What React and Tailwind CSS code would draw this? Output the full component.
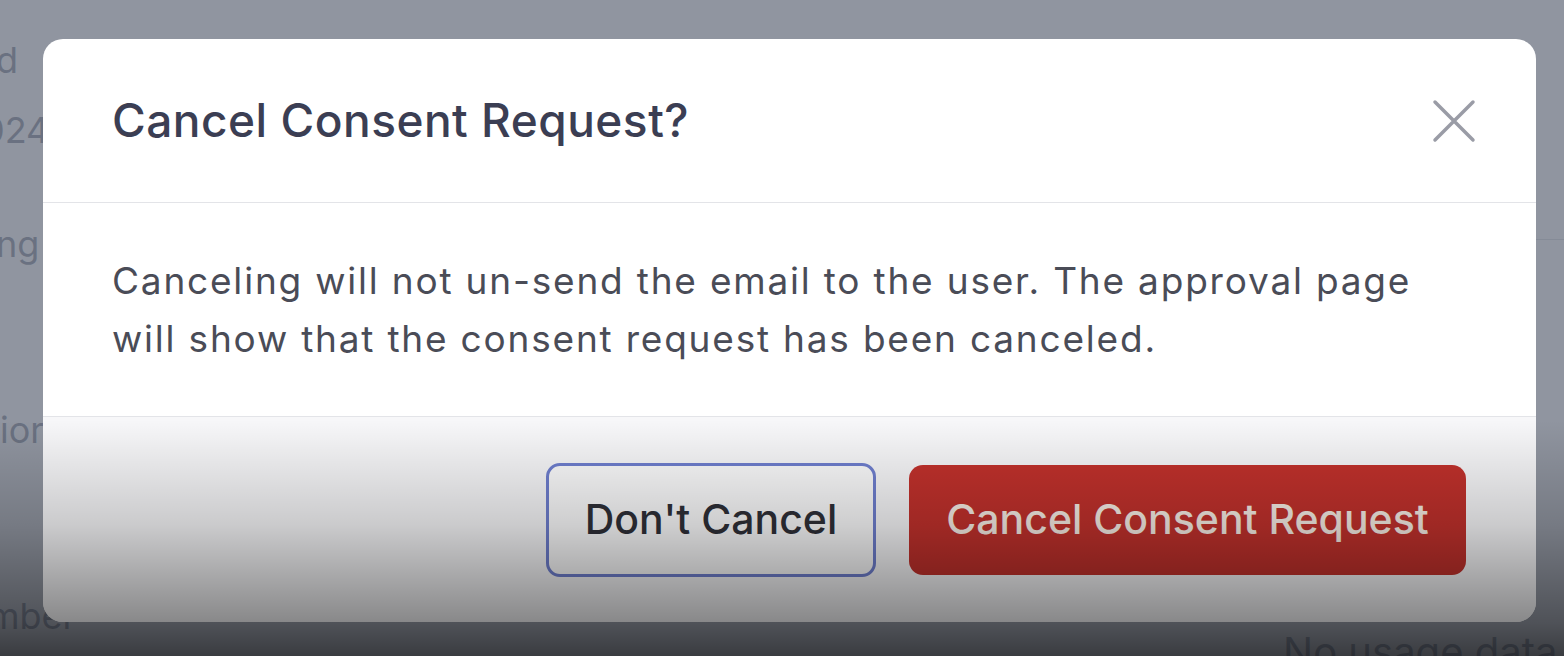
import React from 'react';

const BackgroundPage = () => {
    return (
        <div className="flex h-full w-full bg-white text-gray-500" style={{ fontFamily: 'Inter, sans-serif' }}>
            <div className="ml-[-4px] flex w-[200px] flex-col text-[36px] leading-[44px]">
                <div className="mt-[38px]">d</div>
                <div className="mt-[26px] ml-[-14px]">024</div>
                <div className="mt-[70px]">ng</div>
                <div className="mt-[142px] ml-[4px]">ior</div>
                <div className="mt-[142px] ml-[-8px]">mber</div>
            </div>
            <div className="flex flex-1 flex-col">
                <div className="h-[240px] border-b border-gray-300" />
                <div className="mt-auto mb-[-26px] pl-[1087px] text-[40px] whitespace-nowrap text-gray-500">No usage data</div>
            </div>
        </div>
    );
};

const ConfirmModal = () => {
    return (
        <div className="flex h-[583px] w-[1493px] flex-col overflow-hidden rounded-[20px] bg-white" style={{ fontFamily: 'Inter, sans-serif' }}>
            <div className="flex h-[164px] items-center justify-between border-b border-[#e3e4e8] pl-[69px] pr-[60px]">
                <h2 className="text-[46px] font-medium tracking-[0.5px] text-[#3b3e53]">Cancel Consent Request?</h2>
                <button className="flex h-[44px] w-[44px] items-center justify-center text-[#9a9ca6]">
                    <svg width="44" height="44" viewBox="0 0 44 44" fill="none" stroke="currentColor" strokeWidth="3.5" strokeLinecap="round">
                        <path d="M3 3 L41 41 M41 3 L3 41" />
                    </svg>
                </button>
            </div>
            <div className="border-b border-[#e3e4e8] px-[69px] pt-[49px] pb-[48px] text-[37px] leading-[58px] tracking-[1.8px] text-[#4a4c57]">
                Canceling will not un-send the email to the user. The approval page will show that the consent request has been canceled.
            </div>
            <div className="flex flex-1 items-center justify-end gap-[33px] bg-[#f7f7f9] pr-[70px]">
                <button className="h-[114px] w-[330px] rounded-[14px] border-[3px] border-[#6f7fcf] bg-[#fbfbfc] text-[41px] font-medium text-[#2f3038]">
                    Don't Cancel
                </button>
                <button className="h-[110px] w-[557px] rounded-[14px] bg-[#c2312c] text-[41px] font-medium text-[#f8eee6]">
                    Cancel Consent Request
                </button>
            </div>
        </div>
    );
};

export default function App() {
    return (
        <div className="relative h-[656px] w-[1564px] overflow-hidden">
            <BackgroundPage />
            <div className="absolute inset-0 bg-[#6b7280]/75 pl-[43px] pt-[39px]">
                <ConfirmModal />
            </div>
            {/* darkening toward the bottom of the frame */}
            <div className="pointer-events-none absolute inset-0 bg-[linear-gradient(to_bottom,rgba(0,0,0,0)_0%,rgba(0,0,0,0)_64%,rgba(0,0,0,0.18)_80%,rgba(0,0,0,0.45)_95%,rgba(0,0,0,0.6)_100%)]" />
        </div>
    );
}
